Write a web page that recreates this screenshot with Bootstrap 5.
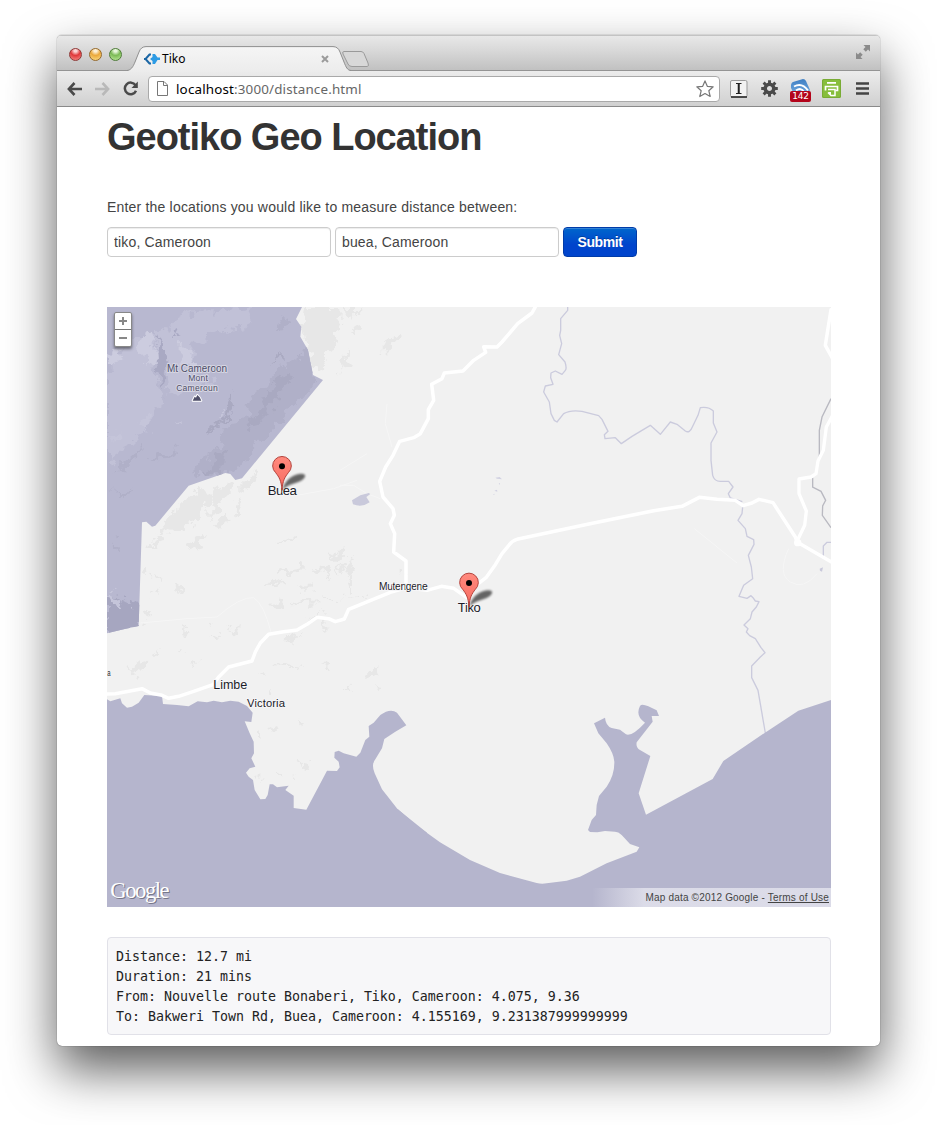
<!DOCTYPE html>
<html lang="en">
<head>
<meta charset="utf-8">
<title>Tiko</title>
<meta name="viewport" content="width=device-width, initial-scale=1">
<link href="https://cdn.jsdelivr.net/npm/bootstrap@5.3.0/dist/css/bootstrap.min.css" rel="stylesheet">
<style>
  body { background: #fff; font-family: "Liberation Sans", Arial, sans-serif; font-size: 14px; line-height: 20px; color: #555; height: 1125px; overflow: hidden; padding: 35px 57px 0 57px; }
  svg { display: block; flex: none; }
  .browser { height: 1011px; background: #fff; border-radius: 5px; box-shadow: 0 0 1px rgba(0,0,0,.75), 0 24px 50px rgba(0,0,0,.64); overflow: hidden; }
  .tabstrip { height: 36px; background: linear-gradient(#e9e9e9, #dadada 40%, #c1c1c1); border-bottom: 1px solid #949494; box-shadow: inset 0 1px 0 #c3c3c3; padding: 0 9px 0 11.5px; }
  .light { width: 13px; height: 13px; border-radius: 50%; }
  .light-red { background: radial-gradient(circle at 50% 15%, #fbd5d5 0 12%, #e0393b 45%, #f58a85 95%); border: 1px solid #8f3a38; }
  .light-amber { background: radial-gradient(circle at 50% 15%, #fdf0d6 0 12%, #eba93c 45%, #fbdc84 95%); border: 1px solid #966a2c; }
  .light-green { background: radial-gradient(circle at 50% 15%, #e8f7dc 0 12%, #7cbb56 45%, #bce998 95%); border: 1px solid #4f7c3a; }
  .page-tab { width: 220px; height: 26px; margin: 11px 0 0 5.5px; font: 12px/26px "Noto Sans", sans-serif; color: #000; }
  .tab-title { margin-left: 2px; }
  .toolbar { height: 36px; background: linear-gradient(#ececec, #d0d0d0); border-bottom: 1px solid #8a8a8a; padding: 0 10px; }
  .omnibox { width: 572px; height: 26px; background: #fff; border: 1px solid #a9a9a9; border-radius: 4px; margin-left: 10px; padding: 0 5px 0 8px; font: 13.4px/22px "Noto Sans", sans-serif; letter-spacing: .16px; color: #666; }
  .omnibox b { font-weight: 400; color: #000; }
  .count { left: 0; bottom: 0; width: 21px; height: 11px; border-radius: 2px; background: #b3041b; color: #fff; font: 9px/11px "DejaVu Sans", sans-serif; text-align: center; letter-spacing: -.3px; }
  .page { padding: 10px 49px 0 50px; }
  h1 { font-size: 38px; line-height: 41px; font-weight: 700; color: #333; letter-spacing: -1.02px; margin: 0 0 39px; }
  .prompt { margin: 0 0 10px; color: #444; letter-spacing: .19px; }
  .place { width: 224px; height: 30px; padding: 4px 6px; font-size: 14px; line-height: 20px; color: #444; letter-spacing: .15px; border: 1px solid #ccc; border-radius: 4px; box-shadow: inset 0 1px 1px rgba(0,0,0,.075); }
  .send { width: 74px; height: 30px; padding: 4px 0; font-size: 14px; line-height: 20px; font-weight: 700; color: #fff; text-shadow: 0 -1px 0 rgba(0,0,0,.25); background: linear-gradient(#06c, #04c 60%); border: 1px solid #003ba8; border-radius: 4px; letter-spacing: -.4px; box-shadow: inset 0 1px 0 rgba(255,255,255,.2); }
  .map { height: 600px; margin-top: 50px; background: #f1f1f1; overflow: hidden; }
  .zoomer { left: 7px; top: 5px; width: 18px; border: 1px solid #888; border-radius: 2px; box-shadow: 0 2px 3px rgba(0,0,0,.45); background: #fff; }
  .zoomer span { height: 16px; }
  .zoomer span + span { border-top: 1px solid #777; height: 17px; }
  .credit { right: 0; bottom: 0; width: 239px; height: 19px; padding-right: 2px; font: 10px/19px "Liberation Sans", sans-serif; letter-spacing: .19px; color: #444; text-align: right; background: linear-gradient(90deg, rgba(245,245,250,0), rgba(245,245,250,.6) 52px); white-space: nowrap; }
  .credit a { color: #444; }
  .result { margin: 30px 0 0; padding: 9px 8px 7px; height: 98px; background: #f7f7f9; border: 1px solid #e1e1e8; border-radius: 4px; font: 13.29px/20px "DejaVu Sans Mono", monospace; color: #222; overflow: hidden; }
</style>
</head>
<body>
<div class="browser">
  <div class="tabstrip d-flex align-items-start">
    <div class="d-flex" style="gap:7px; padding-top:12.5px">
      <span class="light light-red"></span><span class="light light-amber"></span><span class="light light-green"></span>
    </div>
    <div class="page-tab position-relative d-flex align-items-center">
      <svg class="position-absolute top-0 start-0" width="250" height="26" viewBox="0 0 250 26">
        <defs><linearGradient id="tabFill" x1="0" y1="0" x2="0" y2="1"><stop offset="0" stop-color="#f5f5f5"/><stop offset="1" stop-color="#ececec"/></linearGradient></defs>
        <path d="M0 25C4 24 6 21 8 16L12 6Q14 .8 19 .8H206Q211 .8 213 6L217 16C219 21 220 24 224 25V26H0Z" fill="url(#tabFill)"/>
        <path d="M0 24.500C4 24 6 21 8 16L12 6Q14 .6 19 .6H206Q211 .6 213 6L217 16C219 21 220 24 224 24.500" fill="none" stroke="#8f8f8f"/>
        <path d="M217 5.500H234Q236 5.500 237 7.500L241 17Q242.500 20.500 240 20.500H225Q222 20.500 221 18L216 8Q215 5.500 217 5.500Z" fill="#d8d8d8" stroke="#9a9a9a"/>
      </svg>
      <svg class="position-relative" style="margin-left:17px" width="16" height="12" viewBox="0 0 16 12">
        <path d="M7 1.500H5.500L1.500 6L5.500 10.500H7" fill="none" stroke="#1c67a5" stroke-width="2"/>
        <path d="M0 5H3V7H0Z" fill="#1c67a5"/>
        <path d="M8.500 1H11L13.500 4.500H16V7H13.500L11 11H8.500V8L6 6L8.500 4Z" fill="#2d9be4"/>
      </svg>
      <span class="tab-title position-relative">Tiko</span>
      <svg class="position-relative ms-auto" style="margin-right:18px" width="8" height="8" viewBox="0 0 8 8"><path d="M1 1L7 7M7 1L1 7" stroke="#9b9b9b" stroke-width="2"/></svg>
    </div>
    <svg class="ms-auto" style="margin-top:9px" width="16" height="16" viewBox="0 0 16 16" fill="#8b8b8b"><path d="M8.500 1H15V7.500L13 5.500L10.800 7.700L8.300 5.200L10.500 3ZM7.500 15H1V8.500L3 10.500L5.200 8.300L7.700 10.800L5.500 13Z"/></svg>
  </div>

  <div class="toolbar d-flex align-items-center">
    <svg width="15" height="14" viewBox="0 0 15 14" fill="none" stroke="#4a4a4a" stroke-width="2.600"><path d="M7.500 1L1.900 7L7.500 13M2 7H15"/></svg>
    <svg style="margin-left:13px" width="15" height="14" viewBox="0 0 15 14" fill="none" stroke="#b9b9b9" stroke-width="2.600"><path d="M7.500 1L13.100 7L7.500 13M13 7H0"/></svg>
    <svg style="margin-left:13px" width="15" height="15" viewBox="0 0 15 15"><path d="M12.500 4.200A5.800 5.800 0 1 0 13 9.700" fill="none" stroke="#4a4a4a" stroke-width="2.500"/><path d="M14.800 .6V7H8.500Z" fill="#4a4a4a"/></svg>
    <div class="omnibox d-flex align-items-center">
      <svg width="11" height="15" viewBox="0 0 11 15"><path d="M.5 .5H7L10.500 4V14.500H.5ZM6.500 .5V4.500H10.500" fill="#fff" stroke="#777"/></svg>
      <span style="margin-left:8px"><b>localhost</b>:3000/distance.html</span>
      <svg class="ms-auto" width="18" height="18" viewBox="0 0 18 18"><path d="M9 .9L11.300 6.300L17.200 6.800L12.800 10.700L14.200 16.500L9 13.500L3.800 16.500L5.200 10.700L.8 6.800L6.700 6.300Z" fill="#fff" stroke="#777" stroke-width="1.200" stroke-linejoin="round"/></svg>
    </div>
    <svg style="margin-left:10px" width="18" height="18" viewBox="0 0 18 18"><rect x=".5" y=".5" width="16.500" height="16.500" rx="1.500" fill="#f2f2f2" stroke="#999"/><path d="M1 17H17" stroke="#222" stroke-width="1.300"/><path d="M6 3.500H11.500M6 13.500H11.500" stroke="#222" stroke-width="1.200"/><path d="M8.750 3.500V13.500" stroke="#222" stroke-width="2"/></svg>
    <svg style="margin-left:13px" width="17" height="17" viewBox="-8.500 -8.500 17 17"><circle r="4.300" fill="none" stroke="#4a4a4a" stroke-width="3.600"/><path d="M0-8.300V-5M0 5V8.300M-8.300 0H-5M5 0H8.300M-5.900-5.900L-3.700-3.700M5.900 5.900L3.700 3.700M-5.900 5.900L-3.700 3.700M5.900-5.900L3.700-3.700" stroke="#4a4a4a" stroke-width="2.900"/></svg>
    <div class="position-relative" style="margin:4px 0 0 12px; width:21px; height:23px">
      <svg width="21" height="20" viewBox="0 0 21 20"><defs><linearGradient id="feed" x1="0" y1="0" x2="0" y2="1"><stop offset="0" stop-color="#3f7fc3"/><stop offset="1" stop-color="#76aee2"/></linearGradient></defs><path d="M3 3L13 0Q15 0 16 2L20 11L17 17H5L1 9Q.5 4 3 3Z" fill="url(#feed)"/><path d="M4 7.500Q12 3 18 11.500M6 11.500Q11 8 14 13" fill="none" stroke="#fff" stroke-width="2"/></svg>
      <span class="count position-absolute">142</span>
    </div>
    <svg style="margin-left:11px" width="19" height="19" viewBox="0 0 19 19"><rect width="19" height="19" rx="1.500" fill="#87be3c"/><rect x=".5" y=".5" width="18" height="18" rx="1.500" fill="none" stroke="#79ab35"/><path d="M5 3.800H14M3.500 11.500V7.500H15.500V11.500H13.500" fill="none" stroke="#fff" stroke-width="1.700"/><path d="M6 10.500H13V16.500H9L6 13.500" fill="none" stroke="#fff" stroke-width="1.500"/><path d="M6 13H9V16.500Z" fill="#fff"/></svg>
    <svg style="margin-left:15px" width="13" height="13" viewBox="0 0 13 13"><path d="M0 1.500H13M0 6.500H13M0 11.500H13" stroke="#444" stroke-width="2.700"/></svg>
  </div>

  <main class="page">
    <h1>Geotiko Geo Location</h1>
    <p class="prompt">Enter the locations you would like to measure distance between:</p>
    <form class="d-flex gap-1" onsubmit="return false">
      <input class="form-control place" type="text" value="tiko, Cameroon" aria-label="From">
      <input class="form-control place" type="text" value="buea, Cameroon" aria-label="To">
      <button class="btn send" type="submit">Submit</button>
    </form>

    <div class="map position-relative">
      <svg width="724" height="600" viewBox="0 0 2172 1800">
        <defs>
          <filter id="rough" x="-5%" y="-5%" width="110%" height="110%"><feTurbulence type="fractalNoise" baseFrequency=".03" numOctaves="4" seed="7"/><feDisplacementMap in="SourceGraphic" scale="62" xChannelSelector="R" yChannelSelector="G"/></filter>
          <filter id="soft" x="-30%" y="-50%" width="160%" height="200%"><feGaussianBlur stdDeviation="3.500"/></filter>
          <clipPath id="parkClip"><path id="park" d="M0 0H585L567 36L583 59L580 89L603 129L618 204L648 219L405 514L385 519L370 501L355 498L245 536L145 656L135 659L118 644L105 646L95 957L50 967L0 979Z"/></clipPath>
          <linearGradient id="pinFill" x1="0" y1="0" x2="0" y2="1"><stop offset="0" stop-color="#ff8a7e"/><stop offset="1" stop-color="#f86a60"/></linearGradient>
          <g id="pin">
            <path d="M2-2C5-22 25-47 55-50Q78-50 65-35C52-21 22-22 2-2Z" fill="#000" opacity=".58" filter="url(#soft)"/>
            <path d="M0 0C-2-30-9-40-19-53A28 28 0 1 1 19-53C9-40 2-30 0 0Z" fill="url(#pinFill)" stroke="#b4433c" stroke-width="3"/>
            <circle cy="-72" r="9" fill="#000"/>
          </g>
        </defs>

        <!-- relief on open land -->
        <g fill="#e7e7e7" filter="url(#rough)">
          <path d="M595 0H690L700 60L670 120L650 160L625 195L600 110L585 60ZM710 0H770L740 30L715 40Z"/>
          <path d="M245 580L290 545L310 570L290 620L260 650L255 665L150 680L200 610Z"/>
          <path d="M310 560L370 520L380 530L340 600L310 640ZM400 520L450 500L430 540L400 560ZM330 645L350 620L365 640L340 665ZM240 700L290 680L280 720L250 725ZM380 600L400 570L405 590L385 620Z"/>
          <path d="M700 150L720 130L725 170L700 200ZM830 105L880 75L890 85L850 130L830 130ZM740 60L755 50L760 75L745 90Z"/>
          <path d="M670 745L720 715L725 725L690 760ZM510 785L590 775L590 787L510 797ZM600 780L660 790L680 807L620 797ZM470 840L540 810L540 823L480 845ZM570 845L620 835L620 847L580 850ZM510 702L555 700V710L510 711Z"/>
          <path d="M490 890L510 870L535 910L500 905ZM545 885L640 880L645 889L550 892ZM600 935L640 915L630 935ZM650 880L700 878L690 886Z"/>
          <path d="M310 985L340 975L330 1000ZM360 965L400 950L390 970ZM220 965L245 970L230 985ZM300 945L315 950L305 965ZM70 1090L105 1060L115 1080L85 1100ZM140 1035L155 1025L150 1045ZM210 1040L230 1035L225 1050ZM260 1070L270 1065L265 1085ZM490 1080L540 1070L590 1082L540 1083ZM520 1000L540 985L590 980L550 1000ZM450 1095L480 1090L475 1110Z"/>
          <path d="M125 715L160 685L175 690L150 720ZM110 790L125 785L130 805L115 810ZM145 805L155 800L150 820ZM200 845L220 835L225 855ZM140 860L155 850L150 870ZM110 920L130 915L125 940Z"/>
          <path d="M715 790L730 750L740 800L720 810ZM695 780L720 760L700 800ZM720 840L735 800L735 860ZM700 878L780 868L780 875ZM650 950L660 940L665 965ZM890 790L900 800L890 810ZM770 1110L815 1075L810 1105L790 1115ZM715 1145L735 1130L730 1150ZM810 1125L830 1150L820 1155ZM575 1225L590 1240L585 1260ZM490 1270L510 1260L500 1280ZM570 1365L610 1375L605 1390ZM510 1385L520 1390L510 1400ZM650 1070L675 1070L665 1090ZM480 1150L498 1145L490 1160ZM450 1265L460 1280L450 1290ZM565 1405L575 1415L568 1420ZM450 1410L470 1408L460 1420Z"/>
        </g>

        <!-- national park and its relief -->
        <use href="#park" fill="#b8b8d0"/>
        <g clip-path="url(#parkClip)"><g filter="url(#rough)">
          <path d="M150 75L240 20L330 15L440 0L410 60L330 80L270 110L250 180L330 240L230 240L190 260L180 180L150 130Z" fill="#c1c1d7"/>
          <path d="M20 150L60 90L150 90L140 160L150 240L170 280L120 360L60 420L0 470V200Z" fill="#c1c1d7"/>
          <path d="M95 100L140 75L150 150L130 175L90 140ZM215 110L250 130L265 180L215 170ZM0 140L40 130L50 150L10 170Z" fill="#ccccdf"/>
          <path d="M200 340L225 330L215 345ZM340 310L355 320L340 330ZM0 390L40 370L30 400ZM100 350L130 330L120 370Z" fill="#c5c5da"/>
          <path d="M160 85L180 150L168 240L180 260L160 240L150 150ZM190 70L220 85L195 83Z" fill="#a9a9c3"/>
          <path d="M300 450L350 410L330 380L420 330L430 270L480 240L510 190L570 150L620 110L630 220L400 480L330 510L250 500Z" fill="#b0b0c8"/>
          <path d="M310 470L360 420L350 490L290 510ZM420 340L480 300L470 260L550 200L540 230L480 320L440 365ZM310 360L360 330L350 300L380 260L390 290L365 340L300 375ZM490 170L530 140L530 155Z" fill="#a9a9c1"/>
          <path d="M20 490L100 420L105 425L50 490ZM140 450L220 425L200 445L150 460ZM0 560L80 545L60 557ZM20 700L50 720L40 740ZM510 40L550 25L555 55L520 65Z" fill="#b0b0c8"/>
          <path d="M0 875L30 865L100 900V970L0 985Z" fill="#a6a6c0"/>
          <path d="M0 865L35 870L60 910L20 900ZM0 840L25 835L15 850Z" fill="#c5c5da"/>
        </g></g>

        <!-- rivers, borders and tracks -->
        <path d="M100 948L240 935L330 930Q400 868 440 872Q470 890 492 975M570 565L680 545L750 520M699 535L740 535L780 560L820 575M699 490L780 440M840 290L835 350L855 420M1762 665L1890 768M2045 725Q2010 800 2050 825T2130 800" fill="none" stroke="#f6f6f6" stroke-width="3"/>
        <g fill="none" stroke="#cbcbdd" stroke-width="4" stroke-linejoin="round">
          <path d="M1382 0V10L1361 35V70L1358 85L1364 110L1355 143L1374 165Q1380 185 1375 190L1365 202L1345 192L1332 198L1331 212L1338 232L1315 237L1310 255L1327 285L1332 320L1342 340L1350 345L1370 320Q1390 308 1425 313L1475 326L1485 337L1503 373L1492 383L1494 395L1525 392L1543 410L1575 388L1630 355L1660 382L1690 345L1710 352L1735 372Q1748 380 1756 360L1773 325L1780 302Q1805 298 1819 312V348L1830 375L1812 408V460L1817 505Q1822 523 1840 523L1865 523L1878 540L1864 560L1870 573L1906 584"/>
          <path d="M1907 600L1905 620L1893 640L1915 665L1920 688L1940 698L1941 712L1924 745L1933 780L1937 815L1910 835L1896 868L1920 874L1932 866L1938 872L1945 882L1956 884L1948 900L1935 915L1930 935L1911 954L1923 965L1918 975L1928 986L1945 995L1962 1022L1974 1037L1960 1050L1934 1077V1112L1953 1150L1975 1278"/>
          <path d="M2172 706H2160L2149 717V748"/>
        </g>
        <path d="M2172 275L2145 330L2137 370V450M2117 512V540L2142 553L2156 580L2147 597L2146 625L2172 662" fill="none" stroke="#b9b9c1" stroke-width="4"/>
        <path d="M735 580L760 565L785 558L790 561L778 570L788 586Q765 603 738 592ZM2138 785L2148 781L2145 794L2139 791Z" fill="#c9c9db"/>
        <path d="M1165 512L1178 510L1185 517L1170 515ZM1175 530L1179 528V533ZM1162 551L1170 548L1171 554ZM1158 562L1162 560V564Z" fill="#d2d2e2"/>

        <!-- gulf and bays -->
        <g fill="#b5b5cd">
          <path d="M0 1177L10 1183L40 1174L45 1189L60 1202L75 1199L95 1187L112 1164L165 1167L168 1191L210 1194L245 1198L272 1183L300 1186L320 1181L345 1186L370 1181L395 1184L420 1197L437 1217L433 1245L413 1243L428 1279L440 1304L441 1339L433 1354L445 1379L428 1384L417 1397L425 1409L438 1419L443 1449L460 1477L475 1476L482 1464L488 1432L498 1432L510 1441L545 1436L535 1449L560 1466V1503L598 1508L660 1391L690 1392L698 1381L695 1364L682 1352L683 1335L695 1331L710 1339L748 1349L760 1337L775 1299L787 1289L785 1257L800 1247L820 1224Q850 1202 870 1217L898 1255L865 1274L832 1296L825 1324L805 1357Q792 1372 803 1399L825 1447L872 1507L960 1577V1800H0Z"/>
          <path transform="translate(699 1119)" d="M174 388L228 435L300 487L390 540L480 579L590 609Q605 613 620 610L680 602L720 590L800 550L890 515L898 502L870 492L845 465Q835 455 825 455L795 453L772 457L750 456L744 450L755 420L768 405L770 375L777 348L800 320Q824 285 823 245Q821 220 800 190L775 160L762 130L795 113Q797 137 815 144L840 149L858 163Q875 171 915 128Q885 108 900 78Q905 70 925 79L950 91L957 108H935L938 125L890 187Q887 202 900 210L931 228L896 340L918 404L1118 297L1150 243L1275 158L1375 92L1473 60V681H0V388Z"/>
        </g>

        <!-- main roads -->
        <g fill="none" stroke="#fff" stroke-width="10.500" stroke-linejoin="round" stroke-linecap="round">
          <path d="M1287 -4L1275 18L1232 50L1185 105L1170 120L1130 119L1136 136L1100 160L1068 192L1012 198L1005 215L974 232L980 280L964 308V335L940 380L920 392L878 403L858 445L836 480L818 523L828 570L858 605L862 625L850 650L863 680L860 735L897 762V842"/>
          <path d="M-5 1161L25 1160L105 1145L130 1158L165 1165L185 1174L215 1168L260 1153L318 1133L335 1110L365 1080L435 1062L445 1035L460 1008L485 982L530 974L570 969L600 952L630 931L665 935L685 944L712 936L725 907L850 856L900 842L960 850L1003 838L1040 844L1086 876L1095 845L1137 812L1165 773L1185 740L1208 712Q1214 702 1230 697L1449 650L1640 611L1725 598L1777 571L1830 577L1885 580L1908 596L1935 588L1956 577L1998 587L2065 690L2070 705L2177 767"/>
          <path d="M2172 8L2155 115L2177 155"/>
          <path d="M2177 325L2158 360L2149 430L2133 462L2127 500L2112 510L2076 516V560L2098 612L2093 655L2069 705" stroke-width="10"/>
        </g>
        <circle cx="2072" cy="707" r="11" fill="#fff"/>

        <!-- place names -->
        <g font-family="Liberation Sans, sans-serif" text-anchor="middle" stroke="#f5f5f7" stroke-width="6" stroke-linejoin="round" paint-order="stroke" fill="#1c1c28">
          <g fill="#4e4e68" stroke="#d5d5e2">
            <text x="270" y="194" font-size="30" textLength="180">Mt Cameroon</text>
            <text x="273" y="223" font-size="26" textLength="59">Mont</text>
            <text x="270" y="253" font-size="26" textLength="125">Cameroun</text>
            <path d="M257 281L263 269L267 272L271 264L278 271L283 281Z" stroke="#fff"/>
          </g>
          <text x="526" y="564" font-size="40" textLength="88">Buea</text>
          <text x="1087" y="914" font-size="39" textLength="69">Tiko</text>
          <text x="889" y="850" font-size="31" textLength="146">Mutengene</text>
          <text x="370" y="1145" font-size="38" textLength="102">Limbe</text>
          <text x="477" y="1200" font-size="34" textLength="114">Victoria</text>
          <text x="1" y="1108" font-size="29" textLength="10" lengthAdjust="spacingAndGlyphs" text-anchor="start">a</text>
        </g>
        <use href="#pin" x="525" y="550"/>
        <use href="#pin" x="1086" y="900"/>
        <g font-family="Liberation Serif, serif" font-size="68">
          <text x="10" y="1772" textLength="178" fill="#777789" transform="translate(3 3)">Google</text>
          <text x="10" y="1772" textLength="178" fill="#fff">Google</text>
        </g>
      </svg>
      <div class="zoomer position-absolute d-flex flex-column">
        <span class="d-flex align-items-center justify-content-center"><svg width="8" height="8"><path d="M0 4H8M4 0V8" stroke="#888" stroke-width="2"/></svg></span>
        <span class="d-flex align-items-center justify-content-center"><svg width="8" height="8"><path d="M0 4H8" stroke="#888" stroke-width="2"/></svg></span>
      </div>
      <div class="credit position-absolute">Map data ©2012 Google - <a href="#">Terms of Use</a></div>
    </div>

<pre class="result">Distance: 12.7 mi
Duration: 21 mins
From: Nouvelle route Bonaberi, Tiko, Cameroon: 4.075, 9.36
To: Bakweri Town Rd, Buea, Cameroon: 4.155169, 9.231387999999999</pre>
  </main>
</div>
<script src="https://cdn.jsdelivr.net/npm/bootstrap@5.3.0/dist/js/bootstrap.bundle.min.js"></script>
</body>
</html>
